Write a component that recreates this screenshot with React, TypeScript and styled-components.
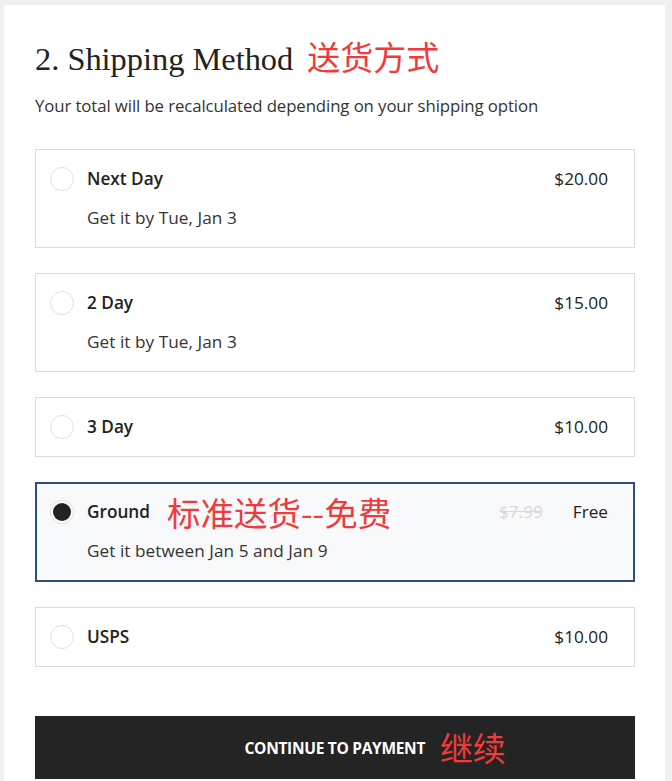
import React from "react";
import styled, { createGlobalStyle } from "styled-components";

const Global = createGlobalStyle`
  html, body { margin: 0; padding: 0; background: #eff0f1; }
  body { font-family: "Open Sans", "Noto Sans CJK SC", sans-serif; color: #222; }
  * { box-sizing: border-box; }
`;

const Page = styled.div`
  padding: 5px 7px 0 4px;
  height: 781px;
  overflow: hidden;
`;

const Card = styled.div`
  background: #fff;
  padding: 34px 30px 40px 31px;
  min-height: 800px;
`;

const Title = styled.h2`
  margin: 0;
  display: flex;
  align-items: baseline;
  gap: 14px;
  font-family: "Liberation Serif", "DejaVu Serif", serif;
  font-weight: 400;
  font-size: 32.4px;
  line-height: 40px;
  color: #222;
`;

const Red = styled.span<{ $size?: number }>`
  font-family: "Noto Sans CJK SC", sans-serif;
  color: #f23a3a;
  font-size: ${(p) => p.$size ?? 33}px;
  font-weight: 400;
  line-height: 1;
`;

const Sub = styled.p`
  margin: 16px 0 0;
  font-size: 16.8px;
  font-weight: 400;
  color: #333;
  line-height: 22px;
  letter-spacing: -0.1px;
`;

const List = styled.div`
  margin-top: 32px;
  display: flex;
  flex-direction: column;
  gap: 25px;
`;

const Option = styled.div<{ $selected?: boolean }>`
  display: grid;
  grid-template-columns: 24px 1fr auto;
  column-gap: 13px;
  row-gap: 15px;
  align-items: center;
  padding: ${(p) => (p.$selected ? "16px 25px 17px 13px" : "17px 26px 17px 14px")};
  border: ${(p) => (p.$selected ? "2px solid #2d4e7e" : "1px solid #dcdcdc")};
  background: ${(p) => (p.$selected ? "#f7f9fb" : "#fff")};
`;

const Radio = styled.span<{ $checked?: boolean }>`
  width: 24px;
  height: 24px;
  border-radius: 50%;
  border: 1px solid #e0e0e0;
  background: #fff;
  display: flex;
  align-items: center;
  justify-content: center;
  &::after {
    content: "";
    width: 18px;
    height: 18px;
    border-radius: 50%;
    background: #222;
    display: ${(p) => (p.$checked ? "block" : "none")};
  }
`;

const Name = styled.div`
  display: flex;
  align-items: center;
  gap: 17px;
  font-size: 17.2px;
  font-weight: 600;
  color: #222;
  height: 24px;
  line-height: 24px;
`;

const PriceBox = styled.div`
  display: flex;
  align-items: center;
  gap: 30px;
  font-size: 17.2px;
  font-weight: 400;
  color: #222;
  line-height: 24px;
`;

const Old = styled.span`
  color: #d8d8d8;
  text-decoration: line-through;
`;

const Detail = styled.div`
  grid-column: 2 / 4;
  font-size: 17.2px;
  font-weight: 400;
  color: #333;
  line-height: 24px;
  letter-spacing: 0.05px;
`;

const Button = styled.button`
  margin-top: 49px;
  width: 100%;
  height: 63px;
  border: none;
  background: #242424;
  color: #fff;
  display: flex;
  align-items: center;
  justify-content: center;
  gap: 15px;
  font-family: "Open Sans", sans-serif;
  font-size: 15.5px;
  font-weight: 700;
  letter-spacing: -0.3px;
  padding: 0 0 0 80px;
`;

type Opt = { name: string; price: string; detail?: string; selected?: boolean; note?: string; old?: string };

const opts: Opt[] = [
  { name: "Next Day", price: "$20.00", detail: "Get it by Tue, Jan 3" },
  { name: "2 Day", price: "$15.00", detail: "Get it by Tue, Jan 3" },
  { name: "3 Day", price: "$10.00" },
  { name: "Ground", price: "Free", old: "$7.99", detail: "Get it between Jan 5 and Jan 9", selected: true, note: "标准送货--免费" },
  { name: "USPS", price: "$10.00" },
];

export default function App() {
  return (
    <Page>
      <Global />
      <Card>
        <Title>
          2. Shipping Method <Red>送货方式</Red>
        </Title>
        <Sub>Your total will be recalculated depending on your shipping option</Sub>
        <List>
          {opts.map((o) => (
            <Option key={o.name} $selected={o.selected}>
              <Radio $checked={o.selected} />
              <Name>
                {o.name}
                {o.note && <Red $size={33.5}>{o.note}</Red>}
              </Name>
              <PriceBox>
                {o.old && <Old>{o.old}</Old>}
                {o.price}
              </PriceBox>
              {o.detail && <Detail>{o.detail}</Detail>}
            </Option>
          ))}
        </List>
        <Button>
          CONTINUE TO PAYMENT <Red $size={33}>继续</Red>
        </Button>
      </Card>
    </Page>
  );
}
